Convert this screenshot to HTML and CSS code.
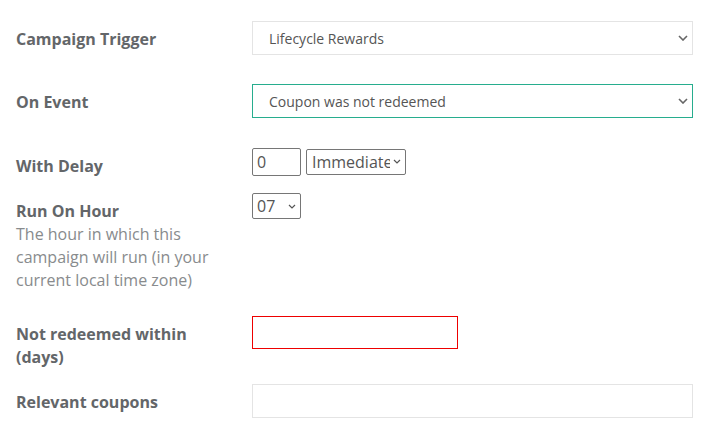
FILE: index.html
```html
<!DOCTYPE html>
<html>
<head>
<meta charset="utf-8">
<link rel="stylesheet" href="styles.css">
</head>
<body>
<form class="form">
  <div class="row gap-xl">
    <label class="label">Campaign Trigger</label>
    <div class="control">
      <div class="select-wrap">
        <select class="select-lg"><option>Lifecycle Rewards</option></select>
        <svg class="chev-lg" width="10" height="6" viewBox="0 0 10 6"><path d="M1 1l4 4 4-4" fill="none" stroke="#666" stroke-width="1.6"/></svg>
      </div>
    </div>
  </div>
  <div class="row gap-xl2">
    <label class="label">On Event</label>
    <div class="control">
      <div class="select-wrap">
        <select class="select-lg focus"><option>Coupon was not redeemed</option></select>
        <svg class="chev-lg" width="10" height="6" viewBox="0 0 10 6"><path d="M1 1l4 4 4-4" fill="none" stroke="#666" stroke-width="1.6"/></svg>
      </div>
    </div>
  </div>
  <div class="row gap-sm">
    <label class="label">With Delay</label>
    <div class="control inline">
      <input class="input-sm num" type="text" value="0">
      <div class="select-wrap fixed">
        <select class="select-sm wide"><option>Immediate</option></select>
        <svg class="chev-sm" width="8" height="5" viewBox="0 0 8 5"><path d="M1 1l3 3 3-3" fill="none" stroke="#555" stroke-width="1.2"/></svg>
      </div>
    </div>
  </div>
  <div class="row gap-md">
    <div class="label">
      <div>Run On Hour</div>
      <div class="help">The hour in which this campaign will run (in your current local time zone)</div>
    </div>
    <div class="control">
      <div class="select-wrap fixed">
        <select class="select-sm hour"><option>07</option></select>
        <svg class="chev-sm" width="8" height="5" viewBox="0 0 8 5"><path d="M1 1l3 3 3-3" fill="none" stroke="#555" stroke-width="1.2"/></svg>
      </div>
    </div>
  </div>
  <div class="row gap-sm">
    <label class="label">Not redeemed within (days)</label>
    <div class="control">
      <input class="input-md error" type="text">
    </div>
  </div>
  <div class="row">
    <label class="label">Relevant coupons</label>
    <div class="control">
      <input class="input-lg" type="text">
    </div>
  </div>
</form>
</body>
</html>
```
FILE: styles.css
```css
html, body {
  margin: 0;
  background: #fff;
}
body {
  font-family: "Open Sans", "Liberation Sans", sans-serif;
  padding: 21px 20px 0 16px;
}
.form {
  display: flex;
  flex-direction: column;
}
.row {
  display: grid;
  grid-template-columns: 236px 1fr;
  align-items: start;
}
.gap-xl { margin-bottom: 29px; }
.gap-xl2 { margin-bottom: 30px; }
.gap-sm { margin-bottom: 15px; }
.gap-md { margin-bottom: 24px; }
.label {
  font-size: 16px;
  font-weight: 700;
  line-height: 23px;
  color: #636669;
  padding-top: 7px;
  padding-right: 20px;
}
.help {
  font-weight: 400;
  color: #888b8d;
}
.control {
  display: flex;
}
.control.inline {
  gap: 5px;
  align-items: flex-start;
}
.select-wrap {
  position: relative;
  flex: 1;
  display: flex;
}
.select-wrap.fixed {
  flex: none;
}
select, input {
  font-family: "Open Sans", "Liberation Sans", sans-serif;
  margin: 0;
  box-sizing: border-box;
  -webkit-appearance: none;
  appearance: none;
  background: #fff;
  outline: none;
}
.select-lg {
  width: 100%;
  height: 34px;
  border: 1px solid #e4e4e4;
  border-radius: 0;
  padding: 0 30px 0 16px;
  font-size: 14px;
  color: #555;
}
.select-lg.focus {
  border-color: #27ad8e;
}
.chev-lg {
  position: absolute;
  right: 5px;
  top: 14px;
}
.select-sm {
  height: 26px;
  border: 1px solid #767676;
  border-radius: 2px;
  padding: 0 15px 0 5px;
  font-size: 16px;
  color: #555;
}
.select-sm.wide {
  width: 100px;
  margin-top: 1px;
}
.select-sm.hour {
  width: 49px;
  padding-left: 4px;
}
.chev-sm {
  position: absolute;
  right: 5px;
  top: 11px;
}
.input-sm {
  width: 49px;
  height: 28px;
  border: 1px solid #767676;
  border-radius: 2px;
  padding: 0 4px;
  font-size: 16px;
  color: #555;
}
.input-md {
  width: 206px;
  height: 33px;
  border: 1px solid #ee0000;
  border-radius: 0;
}
.input-lg {
  width: 100%;
  height: 34px;
  border: 1px solid #e4e4e4;
  border-radius: 0;
}
```
